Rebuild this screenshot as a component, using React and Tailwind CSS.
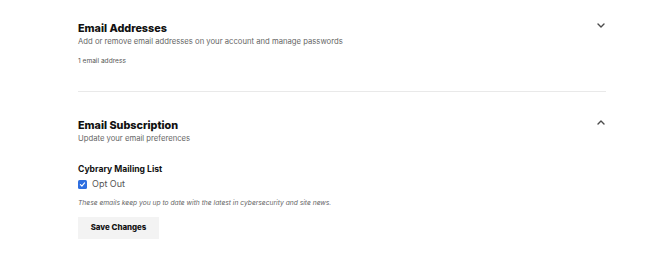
import React from 'react';

function Chevron({ up }) {
    return (
        <svg width="8" height="5" viewBox="0 0 8 5" className="shrink-0">
            <path
                d={up ? 'M1 4L4 1L7 4' : 'M1 1L4 4L7 1'}
                fill="none"
                stroke="#4b4b4b"
                strokeWidth="1.4"
                strokeLinecap="round"
                strokeLinejoin="round"
            />
        </svg>
    );
}

function SectionHeader({ title, subtitle, up }) {
    return (
        <div className="flex justify-between items-start">
            <div>
                <h2 className="text-[10.8px] leading-[14px] font-extrabold text-[#111]">{title}</h2>
                <p className="text-[7.7px] leading-[11px] text-[#666]">{subtitle}</p>
            </div>
            <div className="mt-[1px] mr-[1px]">
                <Chevron up={up} />
            </div>
        </div>
    );
}

export default function App() {
    return (
        <div className="w-[670px] h-[269px] bg-white" style={{ fontFamily: 'Inter, "Liberation Sans", sans-serif' }}>
            <div className="ml-[78px] w-[528px] pt-[22px]">
                {/* Email addresses */}
                <SectionHeader
                    title="Email Addresses"
                    subtitle="Add or remove email addresses on your account and manage passwords"
                />
                <p className="text-[6.6px] leading-[9px] text-[#555] mt-[10px]">1 email address</p>
                <div className="h-px bg-[#e9e9e9] mt-[25px]" />

                {/* Email subscription */}
                <div className="pt-[27px]">
                    <SectionHeader
                        title="Email Subscription"
                        subtitle="Update your email preferences"
                        up
                    />
                    <h3 className="text-[8.6px] leading-[11px] font-bold text-[#111] mt-[20px]">Cybrary Mailing List</h3>
                    <label className="flex items-center gap-[5px] mt-[3px]">
                        <span className="w-[9px] h-[9px] rounded-[1.5px] bg-[#2f6fe0] flex items-center justify-center">
                            <svg width="7" height="7" viewBox="0 0 8 8">
                                <path d="M1.6 4.2L3.3 5.8L6.4 2.2" fill="none" stroke="white" strokeWidth="1.3" strokeLinecap="round" strokeLinejoin="round" />
                            </svg>
                        </span>
                        <span className="text-[9px] leading-[12px] text-[#555]">Opt Out</span>
                    </label>
                    <p className="text-[6.7px] leading-[9px] italic text-[#666] mt-[9px]">
                        These emails keep you up to date with the latest in cybersecurity and site news.
                    </p>
                    <button className="mt-[9px] w-[81px] h-[22px] bg-[#f3f3f3] text-[7.9px] font-extrabold text-[#111]">
                        Save Changes
                    </button>
                </div>
            </div>
        </div>
    );
}
